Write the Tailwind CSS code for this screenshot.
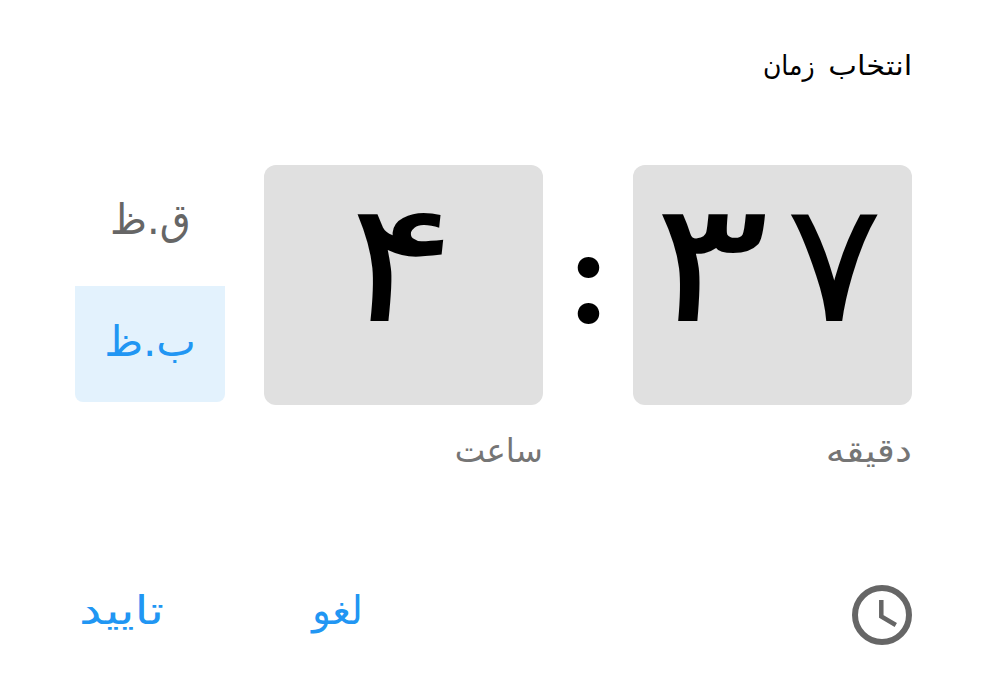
<!DOCTYPE html>
<html lang="fa"><head><meta charset="utf-8"><title>انتخاب زمان</title><script src="https://cdn.jsdelivr.net/npm/@tailwindcss/browser@4"></script></head>
<body class="bg-white">
<main dir="ltr" class="h-[677px] w-[984px] overflow-hidden pl-[75px] pr-[72px] pt-[46px] font-['DejaVu_Sans',sans-serif]">
<h1 dir="rtl" class="flex h-[119px] gap-[23px] text-[27px] leading-[40px] text-black"><span class="inline-block origin-right scale-x-[1.13]">انتخاب</span> <span class="inline-block origin-right scale-x-[0.93]">زمان</span></h1>
<section class="flex h-[240px]">
<div class="w-[150px] text-center text-[42px]">
<button dir="rtl" class="block h-[121px] w-full pb-[12px] text-[#666]"><span class="inline-block scale-x-[0.95]">ق.ظ</span></button>
<button dir="rtl" class="block h-[116px] w-full rounded-b-lg bg-[#e3f2fd] pb-[6px] text-[#2196f3]">ب.ظ</button></div>
<div class="ml-[39px] w-[279px] rounded-xl bg-[#e0e0e0] text-center text-[168px] leading-[196px]"><span class="inline-block -translate-x-[4px] skew-x-[-5deg] scale-x-[1.22]">۴</span></div>
<div class="w-[90px] pl-px text-center font-['Lato'] text-[132px] leading-[214px] font-black">:</div>
<div dir="ltr" class="flex w-[279px] justify-center gap-[21px] rounded-xl bg-[#e0e0e0] text-[168px] leading-[196px]"><span class="inline-block -translate-x-[11px] skew-x-[-4deg] scale-x-[1.3]">۳</span><span class="inline-block translate-x-[6px] scale-x-[1.08]">۷</span></div>
</section>
<div class="flex pt-[21px] text-[33px] leading-[50px] text-[#757575]"><div class="w-[468px] text-right"><span class="inline-block origin-right scale-x-[0.98]">ساعت</span></div><div class="flex-1 text-right"><span class="inline-block origin-right scale-x-[1.15]">دقیقه</span></div></div>
<footer class="mt-[109px] flex h-[60px] items-center text-[39px] text-[#2196f3]">
<button class="w-[237px] pl-[4px] pb-[8px] text-left"><span class="inline-block origin-left scale-x-[1.29]">تایید</span></button>
<button class="pb-[8px]">لغو</button>
<svg class="ml-auto size-[60px]" viewBox="0 0 60 60" fill="none" stroke="#666"><circle cx="30" cy="30" r="27" stroke-width="6"/><path d="M29.3 15v16.4l14.5 8.6" stroke-width="4.5"/></svg>
</footer>
</main></body></html>
